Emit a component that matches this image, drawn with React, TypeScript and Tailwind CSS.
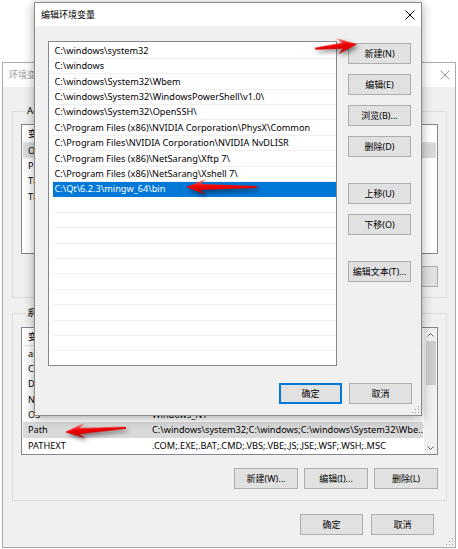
import React from "react";

const paths = [
  "C:\\windows\\system32",
  "C:\\windows",
  "C:\\windows\\System32\\Wbem",
  "C:\\windows\\System32\\WindowsPowerShell\\v1.0\\",
  "C:\\windows\\System32\\OpenSSH\\",
  "C:\\Program Files (x86)\\NVIDIA Corporation\\PhysX\\Common",
  "C:\\Program Files\\NVIDIA Corporation\\NVIDIA NvDLISR",
  "C:\\Program Files (x86)\\NetSarang\\Xftp 7\\",
  "C:\\Program Files (x86)\\NetSarang\\Xshell 7\\",
  "C:\\Qt\\6.2.3\\mingw_64\\bin",
];

const userVars = [
  ["OneDrive", "C:\\Users\\Administrator\\OneDrive"],
  ["Path", "C:\\Users\\Administrator\\AppData\\Local\\Microsoft\\Windo..."],
  ["TEMP", "C:\\Users\\Administrator\\AppData\\Local\\Temp"],
  ["TMP", "C:\\Users\\Administrator\\AppData\\Local\\Temp"],
];

const sysVars = [
  ["asl.log", "Destination=file"],
  ["ComSpec", "C:\\windows\\system32\\cmd.exe"],
  ["DriverData", "C:\\Windows\\System32\\Drivers\\DriverData"],
  ["NUMBER_OF_PROCESSORS", "8"],
  ["OS", "Windows_NT"],
  ["Path", "C:\\windows\\system32;C:\\windows;C:\\windows\\System32\\Wbe..."],
  ["PATHEXT", ".COM;.EXE;.BAT;.CMD;.VBS;.VBE;.JS;.JSE;.WSF;.WSH;.MSC"],
];

function Btn({ children, w = "w-[63px]", focused = false }: { children: React.ReactNode; w?: string; focused?: boolean }) {
  return (
    <div
      className={`${w} h-[21px] shrink-0 flex items-center justify-center bg-[#e1e1e1] text-[9px] whitespace-nowrap text-black ${
        focused ? "border-2 border-[#0078d7]" : "border border-[#adadad]"
      }`}
    >
      {children}
    </div>
  );
}

function CloseX({ color = "#000" }: { color?: string }) {
  return (
    <svg width="10" height="10" viewBox="0 0 10 10">
      <path d="M0.5 0.5 L9.5 9.5 M9.5 0.5 L0.5 9.5" stroke={color} strokeWidth="1" />
    </svg>
  );
}

function Grip() {
  return (
    <svg width="8" height="8" viewBox="0 0 8 8" fill="#9a9a9a">
      <rect x="6" y="0" width="1" height="1" />
      <rect x="3" y="3" width="1" height="1" />
      <rect x="6" y="3" width="1" height="1" />
      <rect x="0" y="6" width="1" height="1" />
      <rect x="3" y="6" width="1" height="1" />
      <rect x="6" y="6" width="1" height="1" />
    </svg>
  );
}

function Arrow({ len, h, left = false, id }: { len: number; h: number; left?: boolean; id: string }) {
  const c = h / 2;
  const head = 20;
  const raw = [
    [0, c - 1.1],
    [len - head * 0.72, c - 3],
    [len - head, 0.3],
    [len, c],
    [len - head, h - 0.3],
    [len - head * 0.72, c + 3],
    [0, c + 1.1],
  ];
  const pts = raw.map(([x, y]) => `${left ? len - x : x},${y}`).join(" ");
  return (
    <svg width={len} height={h} viewBox={`0 0 ${len} ${h}`} className="overflow-visible drop-shadow-[2px_3px_2px_rgba(0,0,0,0.45)]">
      <defs>
        <linearGradient id={id} x1="0" y1="0" x2="0" y2="1">
          <stop offset="0" stopColor="#ff7070" />
          <stop offset="0.45" stopColor="#f00000" />
          <stop offset="1" stopColor="#b00000" />
        </linearGradient>
      </defs>
      <polygon points={pts} fill={`url(#${id})`} />
    </svg>
  );
}

function VarList({ rows, selected, height, scroll = false }: { rows: string[][]; selected: number; height: string; scroll?: boolean }) {
  return (
    <div className={`${height} border border-[#828790] bg-white flex overflow-hidden`}>
      <div className="flex-1 min-w-0 flex flex-col pl-[1px] pr-[1px] overflow-hidden">
        <div className="h-[18px] shrink-0 flex items-center text-[9.2px] border-b border-[#e5e5e5]">
          <div className="w-[128px] pl-[5px] border-r border-[#e5e5e5]">变量</div>
          <div className="pl-[2px]">值</div>
        </div>
        {rows.map(([k, v], i) => (
          <div
            key={k}
            className={`h-[15.3px] shrink-0 flex items-center text-[9.2px] whitespace-nowrap overflow-hidden ${
              i === selected ? "bg-[#d9d9d9]" : ""
            }`}
          >
            <div className="w-[128px] pl-[5px] shrink-0 overflow-hidden">{k}</div>
            <div className="pl-[1px] min-w-0 overflow-hidden">{v}</div>
          </div>
        ))}
      </div>
      {scroll && (
        <div className="w-[13px] shrink-0 bg-[#f0f0f0] flex flex-col items-center">
          <div className="h-[13px] flex items-center justify-center">
            <svg width="7" height="4" viewBox="0 0 7 4">
              <path d="M0.5 3.5 L3.5 0.5 L6.5 3.5" stroke="#606060" fill="none" />
            </svg>
          </div>
          <div className="w-[10px] h-[44px] bg-[#cdcdcd]" />
          <div className="flex-1" />
          <div className="h-[13px] flex items-center justify-center">
            <svg width="7" height="4" viewBox="0 0 7 4">
              <path d="M0.5 0.5 L3.5 3.5 L6.5 0.5" stroke="#606060" fill="none" />
            </svg>
          </div>
        </div>
      )}
    </div>
  );
}

function GroupBox({ label, children }: { label: string; children: React.ReactNode }) {
  return (
    <fieldset className="ml-[9px] w-[435px] min-w-0 border border-[#dcdcdc] px-[8px]">
      <legend className="ml-[5px] px-[1px] text-[9.5px] leading-[16px] text-black">{label}</legend>
      {children}
    </fieldset>
  );
}

export default function App() {
  return (
    <div className="relative w-[458px] h-[549px] bg-white overflow-hidden font-['Noto_Sans','Noto_Sans_CJK_SC',sans-serif] text-black">
      {/* background window: 环境变量 */}
      <div className="absolute left-[2px] top-[62px] w-[454px] h-[486px] border border-[#a9a9a9] bg-[#f0f0f0] flex flex-col">
        <div className="h-[24px] shrink-0 bg-white flex items-center justify-between pl-[6px] pr-[5px]">
          <span className="text-[9px] text-[#9a9a9a]">环境变量</span>
          <CloseX color="#9a9a9a" />
        </div>
        <div className="flex-1 flex flex-col pt-[16px]">
          <GroupBox label="Administrator 的用户变量">
            <div className="mt-[5px]">
              <VarList rows={userVars} selected={0} height="h-[130px]" />
            </div>
            <div className="mt-[12px] mb-[10px] flex justify-end gap-[6px]">
              <Btn w="w-[64px]">新建(N)...</Btn>
              <Btn w="w-[64px]">编辑(E)...</Btn>
              <Btn w="w-[64px]">删除(D)</Btn>
            </div>
          </GroupBox>
          <div className="mt-[7px]">
            <GroupBox label="系统变量">
              <div className="mt-[6px]">
                <VarList rows={sysVars} selected={5} height="h-[128px]" scroll />
              </div>
              <div className="mt-[13px] mb-[11px] flex justify-end gap-[6px]">
                <Btn w="w-[64px]">新建(W)...</Btn>
                <Btn w="w-[64px]">编辑(I)...</Btn>
                <Btn w="w-[64px]">删除(L)</Btn>
              </div>
            </GroupBox>
          </div>
          <div className="mt-[13px] pr-[21px] flex justify-end gap-[8px]">
            <Btn>确定</Btn>
            <Btn>取消</Btn>
          </div>
          <div className="flex-1 flex items-end justify-end pr-[1px] pb-[1px]">
            <Grip />
          </div>
        </div>
      </div>

      {/* foreground window: 编辑环境变量 */}
      <div className="absolute left-[34px] top-[2px] w-[388px] h-[414px] border border-[#8a8a8a] bg-[#f0f0f0] shadow-[0_2px_10px_rgba(0,0,0,0.35)] flex flex-col">
        <div className="h-[23px] shrink-0 bg-white flex items-center justify-between pl-[6px] pr-[6px]">
          <span className="text-[9px]">编辑环境变量</span>
          <CloseX />
        </div>
        <div className="flex-1 flex flex-col pl-[13px] pt-[15px]">
          <div className="flex gap-[11px]">
            <div className="w-[289px] h-[325px] shrink-0 border border-[#828790] bg-white pt-[1.5px] pl-[3.5px] overflow-hidden">
              {Array.from({ length: 22 }).map((_, i) => {
                const p = paths[i];
                const sel = i === paths.length - 1;
                return (
                  <div
                    key={i}
                    className={`h-[15.4px] flex items-center pl-[2px] text-[9.2px] whitespace-nowrap overflow-hidden border-b ${
                      sel ? "bg-[#0078d7] text-white border-[#0078d7]" : "border-[#efefef]"
                    }`}
                  >
                    {p ?? ""}
                  </div>
                );
              })}
            </div>
            <div className="flex flex-col pt-[2px]">
              <Btn>新建(N)</Btn>
              <div className="mt-[10px]"><Btn>编辑(E)</Btn></div>
              <div className="mt-[10px]"><Btn>浏览(B)...</Btn></div>
              <div className="mt-[10px]"><Btn>删除(D)</Btn></div>
              <div className="mt-[26px]"><Btn>上移(U)</Btn></div>
              <div className="mt-[10px]"><Btn>下移(O)</Btn></div>
              <div className="mt-[26px]"><Btn>编辑文本(T)...</Btn></div>
            </div>
          </div>
          <div className="mt-[17px] pr-[9px] flex justify-end gap-[7px]">
            <Btn focused>确定</Btn>
            <Btn>取消</Btn>
          </div>
          <div className="flex-1 flex items-end justify-end pr-[1px] pb-[1px]">
            <Grip />
          </div>
        </div>
      </div>

      {/* red annotation arrows */}
      <div className="absolute left-[315px] top-[38px] rotate-[-6deg]">
        <Arrow id="a1" len={42} h={17} />
      </div>
      <div className="absolute left-[186px] top-[179px]">
        <Arrow id="a2" len={71} h={16} left />
      </div>
      <div className="absolute left-[65px] top-[422px] rotate-[-4deg]">
        <Arrow id="a3" len={61} h={16} left />
      </div>
    </div>
  );
}
